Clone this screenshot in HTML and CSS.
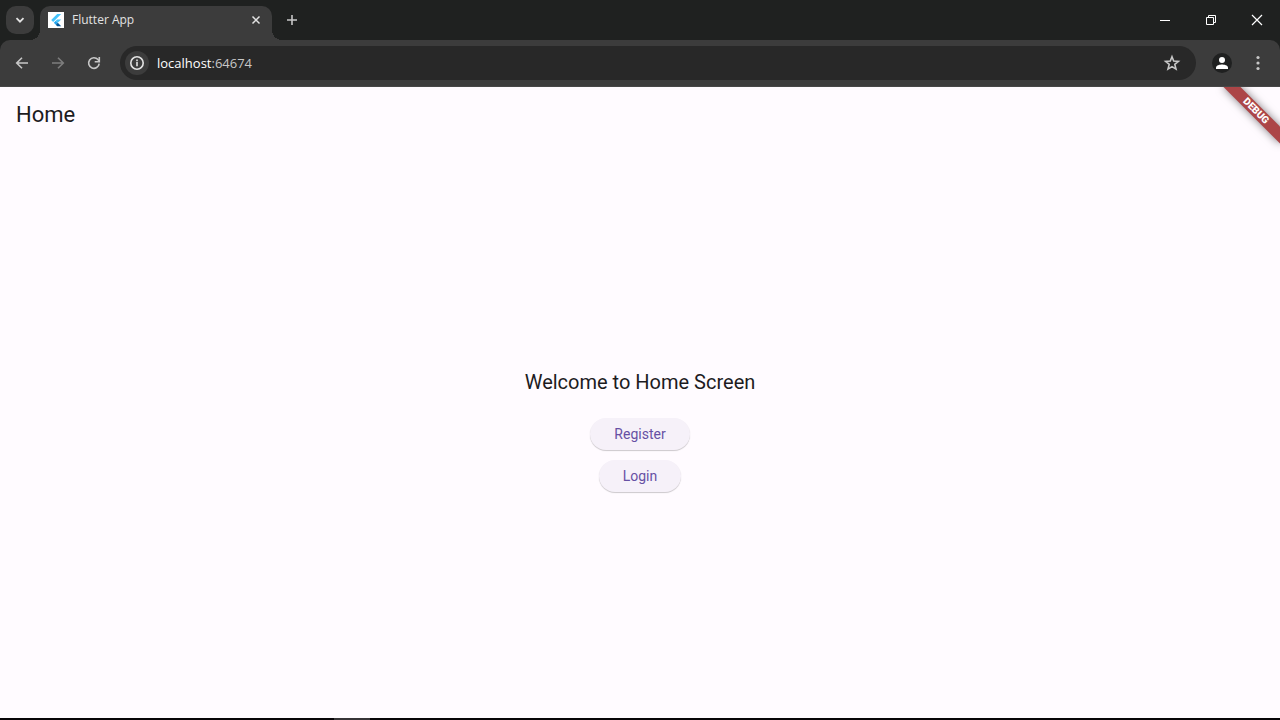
FILE: index.html
```html
<!DOCTYPE html>
<html lang="en">
<head>
<meta charset="utf-8">
<meta name="viewport" content="width=device-width, initial-scale=1">
<title>Flutter App</title>
<link rel="stylesheet" href="styles.css">
</head>
<body>
<div class="browser">
  <header class="tabstrip">
    <button class="tab-search" aria-label="Search tabs">
      <svg width="16" height="16" viewBox="0 0 16 16"><path d="M4.500 6.200 8 9.700l3.500-3.500" fill="none" stroke="#e3e3e3" stroke-width="1.800"/></svg>
    </button>
    <div class="tab">
      <svg class="favicon" width="16" height="16" viewBox="0 0 16 16" aria-hidden="true">
        <rect width="16" height="16" fill="#fff"/>
        <path d="M9.200 2h4L5.200 10 3.200 8z" fill="#45c4fb"/>
        <path d="M9.200 7.400h4L9.800 10.800l-2-2z" fill="#45c4fb"/>
        <path d="m5.800 10.800 2-2 2 2-2 2z" fill="#1fa5ef"/>
        <path d="m7.800 12.800 2-2 3.400 3.400h-4z" fill="#01579b"/>
      </svg>
      <span class="tab-title">Flutter App</span>
      <button class="tab-close" aria-label="Close tab">
        <svg width="16" height="16" viewBox="0 0 16 16"><path d="m4.500 4.500 7 7m0-7-7 7" stroke="#e3e3e3" stroke-width="1.500"/></svg>
      </button>
    </div>
    <button class="new-tab" aria-label="New tab">
      <svg width="16" height="16" viewBox="0 0 16 16"><path d="M8 3v10M3 8h10" stroke="#c7c7c7" stroke-width="1.600"/></svg>
    </button>
    <div class="window-controls">
      <button aria-label="Minimize"><svg width="12" height="12" viewBox="0 0 12 12"><path d="M1 6.500h10" stroke="#fff"/></svg></button>
      <button aria-label="Restore"><svg width="12" height="12" viewBox="0 0 12 12"><path d="M1.500 3.500h7v7h-7zM3.500 3.500v-2h7v7h-2" fill="none" stroke="#fff"/></svg></button>
      <button aria-label="Close"><svg width="12" height="12" viewBox="0 0 12 12"><path d="m1 1 10 10m0-10L1 11" stroke="#fff" stroke-width="1.200"/></svg></button>
    </div>
  </header>
  <nav class="toolbar">
    <button class="nav-button" aria-label="Back"><svg width="16" height="16" viewBox="0 0 16 16"><path d="M14 8H3M8 2.700 2.700 8 8 13.300" fill="none" stroke="#c7c7c7" stroke-width="1.600"/></svg></button>
    <button class="nav-button" aria-label="Forward" disabled><svg width="16" height="16" viewBox="0 0 16 16"><path d="M2 8h11M8 2.700 13.300 8 8 13.300" fill="none" stroke="#7d7d7d" stroke-width="1.600"/></svg></button>
    <button class="nav-button" aria-label="Reload"><svg width="16" height="16" viewBox="0 0 16 16"><path d="M13.200 8.600A5.300 5.300 0 1 1 12 4.600L13.400 6" fill="none" stroke="#c7c7c7" stroke-width="1.600"/><path d="M13.300 2v4.800H8.700" fill="none" stroke="#c7c7c7" stroke-width="1.600"/></svg></button>
    <div class="omnibox">
      <button class="site-info" aria-label="View site information"><svg width="16" height="16" viewBox="0 0 16 16"><circle cx="8" cy="8" r="6.200" fill="none" stroke="#e3e3e3" stroke-width="1.600"/><path d="M8 7v4.300M8 4.600v1.600" stroke="#e3e3e3" stroke-width="1.600"/></svg></button>
      <div class="address" role="textbox" aria-label="Address"><span class="host">localhost</span>:64674</div>
      <button class="bookmark" aria-label="Bookmark this tab"><svg width="18" height="18" viewBox="0 0 18 18"><path d="m9 2.700 1.700 4.300 4.700.4-3.600 3 1.200 4.700L9 12.600l-4 2.500 1.200-4.700-3.600-3 4.700-.4z" fill="none" stroke="#c7c7c7" stroke-width="1.600"/></svg></button>
    </div>
    <button class="profile" aria-label="Profile"><svg width="20" height="20" viewBox="0 0 20 20"><circle cx="10" cy="10" r="10" fill="#1f2020"/><circle cx="10" cy="7" r="3" fill="#fff"/><path d="M4 16v-1.500C4 12.200 8 11.400 10 11.400s6 .8 6 3.100V16z" fill="#fff"/></svg></button>
    <button class="nav-button" aria-label="Menu"><svg width="16" height="16" viewBox="0 0 16 16" fill="#c7c7c7"><circle cx="8" cy="2.500" r="1.600"/><circle cx="8" cy="8" r="1.600"/><circle cx="8" cy="13.500" r="1.600"/></svg></button>
  </nav>
  <div class="page">
    <header class="app-bar"><h1>Home</h1></header>
    <main class="content">
      <p class="welcome">Welcome to Home Screen</p>
      <button class="elevated">Register</button>
      <button class="elevated">Login</button>
    </main>
    <div class="debug-banner">DEBUG</div>
  </div>
  <div class="taskbar"><div class="taskbar-item"></div></div>
</div>
</body>
</html>
```
FILE: styles.css
```css
* { box-sizing: border-box; }
body { margin: 0; font-family: Roboto, sans-serif; }
h1, p { margin: 0; font-weight: 400; }
button { border: 0; padding: 0; background: none; font: inherit; display: grid; place-items: center; }
svg { display: block; }

.browser { min-height: 100vh; display: flex; flex-direction: column; background: #1f2120; }

.tabstrip { height: 40px; display: flex; align-items: center; padding-left: 6px; }
.tab-search { width: 28px; height: 28px; border-radius: 10px; background: #3c3c3c; margin-right: 6px; }
.tab {
  position: relative;
  width: 232px;
  height: 34px;
  align-self: flex-end;
  display: flex;
  align-items: center;
  padding: 0 8px 6px;
  gap: 8px;
  background: #3c3c3c;
  border-radius: 10px 10px 0 0;
}
.tab::before, .tab::after {
  content: "";
  position: absolute;
  bottom: 0;
  width: 10px;
  height: 10px;
}
.tab::before { right: 100%; background: radial-gradient(circle at 0 0, transparent 10px, #3c3c3c 10px); }
.tab::after { left: 100%; background: radial-gradient(circle at 100% 0, transparent 10px, #3c3c3c 10px); }
.tab-title { flex: 1; font: 12px/16px "Open Sans", sans-serif; color: #e3e3e3; }
.tab-close { width: 16px; height: 16px; }
.new-tab { width: 28px; height: 28px; margin-left: 6px; }
.window-controls { margin-left: auto; display: flex; }
.window-controls button { width: 46px; height: 40px; }

.toolbar {
  height: 47px;
  display: flex;
  align-items: center;
  gap: 8px;
  padding: 0 8px;
  background: #3c3c3c;
  border-radius: 10px 10px 0 0;
  border-bottom: 1px solid #474747;
}
.nav-button { width: 28px; height: 28px; }
.omnibox {
  flex: 1;
  height: 34px;
  margin-left: 4px;
  padding: 0 12px 0 5px;
  display: flex;
  align-items: center;
  gap: 8px;
  border-radius: 17px;
  background: #282828;
}
.site-info { width: 24px; height: 24px; border-radius: 50%; background: #3c3c3c; }
.address { flex: 1; font: 13px/20px "Open Sans", sans-serif; color: #c7c7c7; }
.host { color: #fff; }
.bookmark { width: 24px; height: 24px; }
.profile { width: 20px; height: 20px; margin: 0 4px 0 8px; }

.page { position: relative; flex: 1; overflow: hidden; display: flex; flex-direction: column; background: #fffbff; color: #1d1b1e; }
.app-bar { height: 56px; display: flex; align-items: center; padding: 0 16px; }
.app-bar h1 { font-size: 22px; line-height: 28px; }
.content { flex: 1; display: flex; flex-direction: column; align-items: center; justify-content: center; gap: 10px; padding-bottom: 2px; }
.welcome { font-size: 20px; line-height: 28px; margin-bottom: 12px; }
.elevated {
  height: 32px;
  padding: 0 24px;
  border-radius: 16px;
  background: #f6f1f9;
  color: #6750a4;
  font-size: 14px;
  line-height: 20px;
  box-shadow: 0 1px 1px rgba(0, 0, 0, 0.2);
}
.debug-banner {
  position: absolute;
  top: 18px;
  right: -16px;
  width: 80px;
  height: 12px;
  transform: rotate(45deg);
  background: #ac4547;
  box-shadow: 0 0 8px rgba(0, 0, 0, 0.5);
  color: #fff;
  font-size: 10px;
  font-weight: 900;
  line-height: 12px;
  text-align: center;
}

.taskbar { height: 2px; background: #080508; }
.taskbar-item { width: 36px; height: 2px; margin-left: 334px; background: #373437; }
```
